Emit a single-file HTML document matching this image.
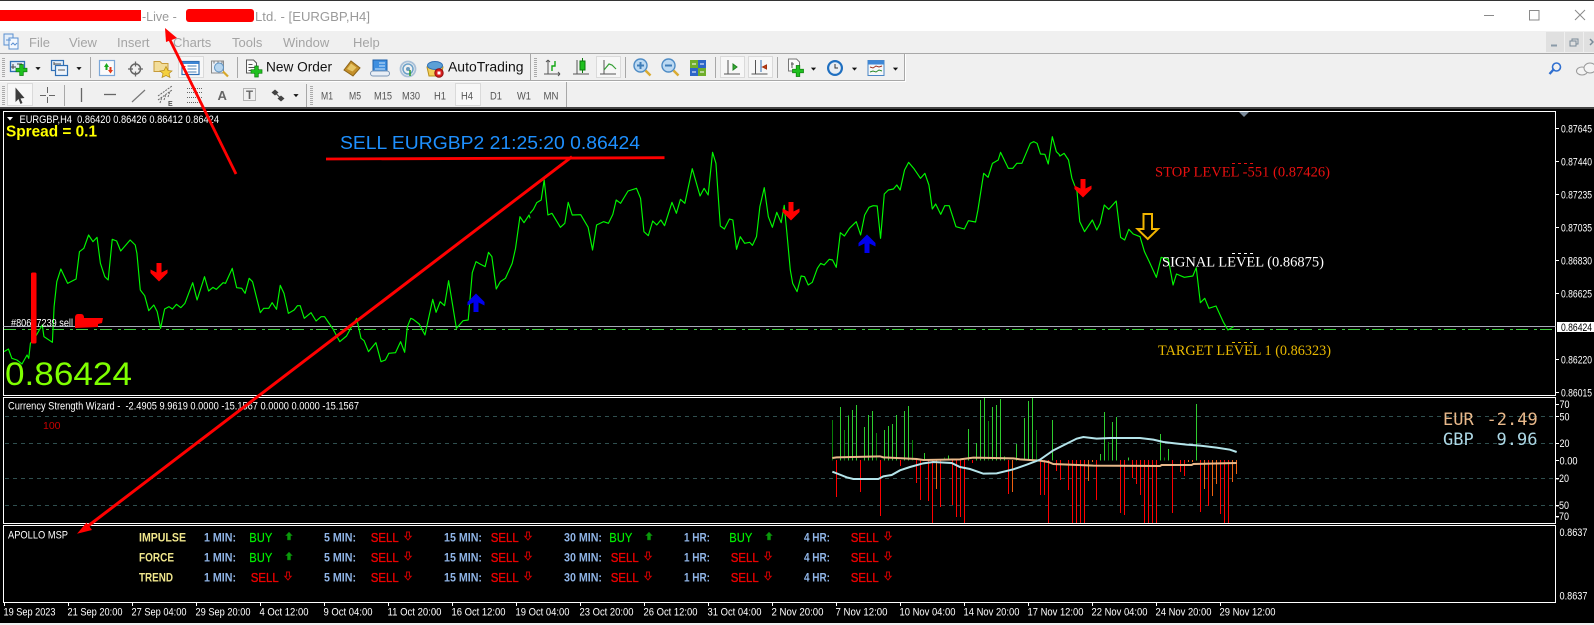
<!DOCTYPE html>
<html><head><meta charset="utf-8"><title>EURGBP,H4</title>
<style>
html,body{margin:0;padding:0;width:1594px;height:625px;overflow:hidden;background:#f0f0f0}
svg{display:block;font-family:"Liberation Sans",Arial,sans-serif}
.g{vector-effect:non-scaling-stroke;fill:none;stroke:#00f800;stroke-width:1.15;stroke-linejoin:round}
.m{font-size:13px;fill:#a4a4a4}
.p{font-size:11px;fill:#555}
.ax{font-size:11px;fill:#fff}
.lb{font-size:12px;font-weight:bold;fill:#f0e68c}
.mn{font-size:12px;font-weight:bold;fill:#8fb4e6}
.buy{font-size:13px;fill:#00ee00;stroke:#00ee00;stroke-width:.2}
.sell{font-size:13px;fill:#ee0000;stroke:#ee0000;stroke-width:.35}
.lv{font-family:"Liberation Serif",serif;font-size:15px}
.bars path{shape-rendering:crispEdges;fill:none;stroke-width:3}
.bg{stroke:#2ecc2e}
.bd{stroke:#087f08}
.br{stroke:#f00}
.bo{stroke:#f06010}
</style></head>
<body>
<svg width="1594" height="625" viewBox="0 0 1594 625" xmlns="http://www.w3.org/2000/svg">
<defs>
<polygon id="pl" points="-1.8,-5.5 1.8,-5.5 1.8,-1.8 5.5,-1.8 5.5,1.8 1.8,1.8 1.8,5.5 -1.8,5.5 -1.8,1.8 -5.5,1.8 -5.5,-1.8 -1.8,-1.8" fill="#1fc01f" stroke="#0a7a0a" stroke-width=".7"/>
<polygon id="dd" points="-2.6,-1.4 2.6,-1.4 0,1.6" fill="#111"/>
<polygon id="ua" points="0,-4.5 3.4,-.8 1.6,-.8 1.6,3.5 -1.6,3.5 -1.6,-.8 -3.4,-.8" fill="#0b9a0b" stroke="#086a08" stroke-width=".5"/>
<polygon id="da" points="-1.4,-4.5 1.4,-4.5 1.4,-.2 3.2,-.2 0,3.5 -3.2,-.2 -1.4,-.2" fill="none" stroke="#d00000" stroke-width="1"/>
<polygon id="ra" points="-2.5,0 2.5,0 2.5,9.5 8.5,6.5 8.5,10 0,18.5 -8.5,10 -8.5,6.5 -2.5,9.5" fill="#f00"/>
<polygon id="ba" points="-2.5,19 2.5,19 2.5,9.5 8.5,12.5 8.5,9 0,.5 -8.5,9 -8.5,12.5 -2.5,9.5" fill="#0000ee"/>
</defs>

<!-- title bar -->
<rect width="1594" height="31" fill="#fff"/>
<rect width="1594" height="1" fill="#333"/>
<text x="142" y="21" font-size="12.5" fill="#9a9a9a">-Live -</text>
<text x="255" y="21" font-size="12.5" fill="#9a9a9a" textLength="115" lengthAdjust="spacingAndGlyphs">Ltd. - [EURGBP,H4]</text>
<rect x="0" y="10" width="141" height="11" fill="#f00"/>
<rect x="186" y="9" width="68" height="13" rx="3" fill="#f00"/>
<path d="M1484 15.5h10" stroke="#8a8a8a"/>
<rect x="1529.5" y="10.5" width="9.5" height="9.5" fill="none" stroke="#8a8a8a"/>
<path d="M1575 10l10 10M1585 10l-10 10" stroke="#8a8a8a"/>

<!-- menu bar -->
<rect y="31" width="1594" height="22" fill="#efefef"/>
<rect x="0" y="31" width="1546" height="22" fill="#f0f0f0"/>
<g transform="translate(4,33)">
<rect x="0" y="1" width="9" height="11" fill="#e4eef9" stroke="#5a8fd0"/>
<rect x="5" y="5" width="9" height="11" fill="#f3f8fe" stroke="#5a8fd0"/>
<path d="M2 7h5M7 12l2-2 2 2 2-2" stroke="#5a8fd0" fill="none"/>
</g>
<text class="m" x="29" y="47">File</text>
<text class="m" x="69" y="47">View</text>
<text class="m" x="117" y="47">Insert</text>
<text class="m" x="173" y="47">Charts</text>
<text class="m" x="232" y="47">Tools</text>
<text class="m" x="283" y="47">Window</text>
<text class="m" x="353" y="47">Help</text>
<rect x="1546" y="32" width="18" height="20" fill="#e0e0e0"/>
<rect x="1565" y="32" width="18" height="20" fill="#e0e0e0"/>
<rect x="1584" y="32" width="10" height="20" fill="#e0e0e0"/>
<path d="M1551 45.5h6" stroke="#8a9aa8" stroke-width="2"/>
<path d="M1570 41h6v5h-6zM1572 41v-2h6v5h-2" stroke="#7a8a98" fill="none"/>
<path d="M1590 39l3 3-3 3" stroke="#7a8a98" stroke-width="1.5" fill="none"/>

<!-- toolbars -->
<rect y="53" width="1594" height="1" fill="#a8a8a8"/>
<rect y="54" width="1594" height="54" fill="#f0f0f0"/>
<rect x="0" y="80" width="905" height="1" fill="#a8a8a8"/>
<rect x="904" y="53" width="1" height="28" fill="#a8a8a8"/>
<rect x="0" y="81" width="906" height="1" fill="#fff"/>
<rect x="905" y="54" width="1" height="27" fill="#fff"/>
<path d="M3.5 58v19M3.5 86v19" stroke="#aaa" stroke-width="3" stroke-dasharray="1 1"/>
<path d="M535.5 58v19M311.5 86v19" stroke="#aaa" stroke-width="3" stroke-dasharray="1 1"/>
<path d="M530.5 54v26M90.5 57v21M237.5 57v21M625.5 57v21M715.5 57v21M777.5 57v21M64.5 85v21M306.5 84v23M566.5 82v26" stroke="#a8a8a8"/>

<!-- selected backgrounds -->
<g fill="#f7f7f7" stroke="#dadada">
<rect x="178.5" y="56.5" width="25" height="21"/>
<rect x="596.5" y="56.5" width="24" height="21"/>
<rect x="720.5" y="56.5" width="24" height="21"/>
<rect x="748.5" y="56.5" width="24" height="21"/>
<rect x="7.5" y="83.5" width="25" height="22"/>
<rect x="455.5" y="83.5" width="25" height="22"/>
</g>

<!-- toolbar 1 icons -->
<g transform="translate(19,68)"><rect x="-8.5" y="-6.5" width="14" height="10" fill="#e3edf8" stroke="#2f6fb5" stroke-width="1.3"/><path d="M-6-4v5M-8-1h5M-2-4h5" stroke="#444" fill="none"/><use href="#pl" x="2.5" y="2"/></g>
<use href="#dd" x="38" y="68.5"/>
<g transform="translate(59,68)"><rect x="-7.5" y="-7.5" width="12" height="10" fill="#e3edf8" stroke="#2f6fb5" stroke-width="1.2"/><rect x="-3.5" y="-2.5" width="12" height="10" fill="#eef4fb" stroke="#2f6fb5" stroke-width="1.2"/><path d="M-5-4h7M-1 2h7M-5-6v3" stroke="#555" fill="none"/></g>
<use href="#dd" x="79" y="68.5"/>
<g transform="translate(107,68)"><rect x="-7.5" y="-7.5" width="15" height="15" fill="#fbfbfb" stroke="#7aa7d8" stroke-width="1.2"/><path d="M-3-1l2.5-4 2.5 4h-1.5v3h-2v-3z" fill="#1aaa1a"/><path d="M1 2h1.5v-3h2v3h1.500l-2.500 3.500z" fill="#e23a1a"/></g>
<g transform="translate(135.5,69)" stroke="#666" fill="none"><circle r="5" stroke-width="1.5"/><path d="M0-7.500v5M0 2.500v5M-7.500 0h5M2.500 0h5" stroke-width="1.300"/></g>
<g transform="translate(163,68.500)"><path d="M-9-7h6l2 2h6v8h-14z" fill="#f2dd9a" stroke="#c79b3a"/><polygon points="3,-2 5,2 9,2.500 6,5 7,9 3,7 -1,9 0,5 -3,2.500 1,2" fill="#f4d03f" stroke="#b58a1a" stroke-width=".7"/></g>
<g transform="translate(190.500,68)"><rect x="-8.500" y="-6.500" width="17" height="13" fill="#fff" stroke="#2f6fb5" stroke-width="1.200"/><path d="M-8-6h16v2h-16z" fill="#3d86d6"/><path d="M-5.500-2v6" stroke="#d03030" stroke-dasharray="1 1"/><path d="M-3-2h9M-3 1h9M-3 4h9" stroke="#4a7fb5"/></g>
<g transform="translate(220,68.500)"><rect x="-8.500" y="-7.500" width="12" height="12" fill="#e8eef5" stroke="#8a8a8a"/><path d="M-6-7v2M-2-7v2M2-7v2" stroke="#777"/><circle cx="-1" cy="-1" r="4.500" fill="#b6d5ef" stroke="#5d93c3"/><path d="M3 3l5 5" stroke="#d7a82c" stroke-width="2.200"/></g>
<g transform="translate(254,68.500)"><path d="M-7.500-8.500h7l3 3v10h-10z" fill="#fafafa" stroke="#555"/><path d="M-5.500-4h4M-5.500-1h7M-5.500 2h3" stroke="#555" fill="none"/><use href="#pl" x="2.500" y="3"/></g>
<text x="266" y="71.700" font-size="13.500" fill="#111" textLength="66" lengthAdjust="spacingAndGlyphs">New Order</text>
<g transform="translate(352,69)"><polygon points="-8,1 -1,-8 8,-1 1,7" fill="#c4902a" stroke="#8d6418"/><polygon points="-5,0 -1,-5.500 4.500,-1.500 .5,2.500" fill="#e6c566"/></g>
<g transform="translate(380,67)"><rect x="-7" y="-7" width="14" height="11" fill="#3e8fe0" stroke="#1e5fa8"/><path d="M-1-4h6M-1-1h6M-5 2h10" stroke="#cfe6fa"/><path d="M-7 9a2.500 2.500 0 0 1 0-5h14a2.500 2.500 0 0 1 0 5z" fill="#e8eef6" stroke="#7a95b5"/></g>
<g transform="translate(408,69)" fill="none"><circle r="7.500" stroke="#a9c0d8" stroke-width="1.800"/><circle r="5" stroke="#6ba1c9" stroke-width="1.500"/><circle r="2" fill="#6a9abf"/><path d="M2 7v-6" stroke="#2a9a2a" stroke-width="1.500"/></g>
<g transform="translate(435,69)"><path d="M-8-2h16l-2 9h-12z" fill="#f3cf5a" stroke="#b88f1a"/><ellipse cx="0" cy="-3.500" rx="7.500" ry="4" fill="#5ba0d6" stroke="#2f6fb5"/><circle cx="4" cy="4" r="4.200" fill="#d81f1f" stroke="#901010"/><rect x="2.500" y="2.500" width="3" height="3" fill="#fff"/></g>
<text x="448" y="71.700" font-size="13.500" fill="#111" textLength="75.500" lengthAdjust="spacingAndGlyphs">AutoTrading</text>

<g transform="translate(553,68)" fill="none" stroke="#555"><path d="M-5-8v14M-9 6h16M-5-8l-2 2M-5-8l2 2M7 6l-2-2M7 6l-2 2"/><path d="M-1 3v-5h3v-5" stroke="#11a511" stroke-width="1.400"/></g>
<g transform="translate(582,68)" fill="none" stroke="#555"><path d="M-5-8v14M-9 6h16"/><rect x="-2" y="-7" width="5" height="9" fill="#1fc01f" stroke="#0a7a0a"/><path d="M.5-10v3M.5 2v3" stroke="#0a7a0a"/></g>
<g transform="translate(609,68)" fill="none" stroke="#555"><path d="M-5-8v14M-9 6h16"/><path d="M-5 2l5-6 3 1 4 4" stroke="#36a036" stroke-width="1.200"/></g>
<g transform="translate(642,67)"><circle cx="-1.500" cy="-1.500" r="6.500" fill="#bcd9f2" stroke="#4f8cc5" stroke-width="1.400"/><path d="M-5-1.500h7M-1.500-5v7" stroke="#3f7db8" stroke-width="2"/><path d="M3.500 3.500l5 5" stroke="#d9ab32" stroke-width="2.500"/></g>
<g transform="translate(670,67)"><circle cx="-1.500" cy="-1.500" r="6.500" fill="#bcd9f2" stroke="#4f8cc5" stroke-width="1.400"/><path d="M-5-1.500h7" stroke="#3f7db8" stroke-width="2"/><path d="M3.500 3.500l5 5" stroke="#d9ab32" stroke-width="2.500"/></g>
<g transform="translate(698,68)"><rect x="-8" y="-8" width="8" height="8" fill="#6fae2c"/><rect x="0" y="-8" width="8" height="8" fill="#2d66c8"/><rect x="-8" y="0" width="8" height="8" fill="#2d66c8"/><rect x="0" y="0" width="8" height="8" fill="#6fae2c"/><path d="M-6-4h4M2-4h4M-6 4h4M2 4h4" stroke="#fff"/></g>
<g transform="translate(733,68)" fill="none" stroke="#555"><path d="M-5-8v14M-9 6h16"/><polygon points="0,-4 4,-1 0,2" fill="#36b036" stroke="#208020"/></g>
<g transform="translate(760.500,68)" fill="none" stroke="#555"><path d="M-5-8v14M-9 6h16"/><path d="M.5-8v12" stroke="#2f6fb5"/><polygon points="6,-3 2,-1 6,1" fill="#c84010" stroke="#a03010"/></g>
<g transform="translate(795,67)"><path d="M-6.500-8h8l3 3v9h-11z" fill="#fafafa" stroke="#777"/><path d="M-4-3h3M-3-5v6" stroke="#555" fill="none"/><use href="#pl" x="3" y="4"/></g>
<use href="#dd" x="813.500" y="69"/>
<g transform="translate(835,68)"><circle r="8" fill="#1f6fc0"/><circle r="5.800" fill="#e9eef3"/><path d="M0-4v4h3" stroke="#333" fill="none"/></g>
<use href="#dd" x="854.500" y="69"/>
<g transform="translate(876,68)"><rect x="-8" y="-7.500" width="16" height="15" fill="#f5f7f9" stroke="#4a86c5"/><rect x="-8" y="-7.500" width="16" height="4" fill="#3d86d6"/><path d="M-6-1l3 1 3-2 3 1 3-1" stroke="#a03020" fill="none"/><path d="M-6 4l3-1 3 1 3-2 3 1" stroke="#2a8a2a" fill="none"/></g>
<use href="#dd" x="895.500" y="69"/>
<g transform="translate(1555,69)" fill="none"><circle cx="1.500" cy="-2" r="4" stroke="#2f6fd0" stroke-width="1.600"/><path d="M-1-0l-4.500 5" stroke="#2f6fd0" stroke-width="2.400"/></g>
<g transform="translate(1584,70)" fill="#f4f4f4" stroke="#999"><ellipse cx="-2" cy="1" rx="5.500" ry="4"/><ellipse cx="6" cy="-2" rx="6" ry="5"/></g>

<!-- toolbar 2 icons -->
<polygon points="15.500,87.500 15.500,102 18.500,99 20.500,104 22.500,103 20.500,98.500 24.500,98" fill="#3c3c3c"/>
<path d="M47.500 87v6M47.500 97v6M40 95.500h6M49 95.500h6" stroke="#666" fill="none"/>
<path d="M81.500 88v14" stroke="#666" stroke-width="1.300"/>
<path d="M104 94.500h12" stroke="#666" stroke-width="1.300"/>
<path d="M132 102l13-12" stroke="#777" stroke-width="1.200"/>
<g stroke="#666" fill="none"><path d="M158 100l14-10M158 96l14-10M160 103l2-6M164 100l2-6M168 97l2-6" stroke-dasharray="2 1"/></g>
<text x="168" y="106" font-size="7" font-weight="bold" fill="#555">E</text>
<g stroke="#666" fill="none" stroke-dasharray="1 1"><path d="M187 88.500h16M187 92.500h16M187 97.500h16M187 102.500h16"/></g>
<text x="217.500" y="100.200" font-size="13" font-weight="bold" fill="#666">A</text>
<rect x="243.500" y="88.500" width="12" height="12" fill="none" stroke="#777" stroke-dasharray="1 1"/>
<text x="246" y="99.200" font-size="11.500" font-weight="bold" fill="#666">T</text>
<path d="M271.500 92.500l3.500-3 3.500 3-3.500 3zM277.500 98.500l3.500-3 3.500 3-3.500 3z" fill="#444"/>
<path d="M275 92.500l6 6" stroke="#444"/>
<use href="#dd" x="296" y="95.500"/>
<text class="p" x="321" y="99.500" textLength="12" lengthAdjust="spacingAndGlyphs">M1</text>
<text class="p" x="349" y="99.500" textLength="12" lengthAdjust="spacingAndGlyphs">M5</text>
<text class="p" x="374" y="99.500" textLength="18" lengthAdjust="spacingAndGlyphs">M15</text>
<text class="p" x="402" y="99.500" textLength="18" lengthAdjust="spacingAndGlyphs">M30</text>
<text class="p" x="434" y="99.500" textLength="12" lengthAdjust="spacingAndGlyphs">H1</text>
<text class="p" x="461" y="99.500" textLength="12" lengthAdjust="spacingAndGlyphs">H4</text>
<text class="p" x="490" y="99.500" textLength="12" lengthAdjust="spacingAndGlyphs">D1</text>
<text class="p" x="517" y="99.500" textLength="14" lengthAdjust="spacingAndGlyphs">W1</text>
<text class="p" x="543.500" y="99.500" textLength="15" lengthAdjust="spacingAndGlyphs">MN</text>

<!-- chart area -->
<rect y="107" width="1594" height="2" fill="#444"/>
<rect y="109" width="1594" height="514" fill="#000"/>
<rect y="623" width="1594" height="2" fill="#f0f0f0"/>
<g fill="none" stroke="#fff">
<rect x="3.500" y="111.500" width="1552" height="284"/>
<rect x="3.500" y="397.500" width="1552" height="126"/>
<rect x="3.500" y="525.500" width="1552" height="77"/>
</g>
<polygon points="1239,112 1249,112 1244,117" fill="#7a8a9a"/>
<polygon points="7,117 13,117 10,120.500" fill="#fff"/>
<text x="19.500" y="123" font-size="11" fill="#fff" textLength="199.500" lengthAdjust="spacingAndGlyphs">EURGBP,H4&#160;&#160;0.86420 0.86426 0.86412 0.86424</text>
<text x="6" y="136.500" font-size="15.500" font-weight="bold" fill="#ff0" textLength="91" lengthAdjust="spacingAndGlyphs">Spread = 0.1</text>

<!-- levels -->
<rect x="3.500" y="326" width="1552" height="1" fill="#a8a8b8"/>
<path d="M4 329.500h1551" stroke="#3fcc3f" stroke-dasharray="12 6 3 3" fill="none"/>

<!-- price curve -->
<polyline class="g" transform="translate(0,130) scale(.33806,.33333)" points="12,665 25,657 35,685 50,690 65,702 80,675 85,685 90,640 105,620 125,585 130,620 155,637 160,530 168,455 180,417 200,460 225,447 235,365 248,355 262,315 275,335 287,322 297,400 310,440 320,450 332,328 345,333 357,363 385,330 400,345 405,370 415,480 428,497 440,542 455,525 465,545 475,595 487,537 500,530 510,537 522,523 535,533 547,520 570,458 583,510 605,440 617,483 630,472 640,478 660,458 667,460 687,415 700,473 715,475 725,490 737,445 747,455 770,548 780,535 795,535 805,518 818,538 829,466 840,490 853,550 870,540 880,527 888,527 900,565 920,548 935,573 950,560 960,560 985,597 1005,635 1025,618 1040,590 1055,565 1068,625 1077,632 1090,665 1112,638 1127,695 1140,690 1150,670 1170,668 1185,635 1197,667 1205,590 1215,565 1222,568 1240,582 1257,615 1280,508 1290,547 1302,515 1315,527 1327,452 1338,520 1350,595 1370,572 1385,570 1397,428 1408,395 1420,402 1435,410 1445,367 1455,380 1468,477 1480,455 1495,445 1515,400 1525,355 1538,260 1550,278 1565,255 1568,265"/>
<polyline class="g" transform="translate(530,120) scale(.33806,.33333)" points="0,280 10,268 20,248 33,240 42,180 53,285 65,280 90,322 103,310 113,247 125,285 150,284 172,322 185,390 197,315 218,305 232,310 245,283 255,240 268,250 290,213 315,205 327,235 337,335 350,347 363,303 375,315 387,300 398,317 420,247 433,280 445,238 458,250 480,146 503,228 515,205 527,225 540,97 550,130 563,318 575,327 590,297 600,300 611,388 622,350 635,370 650,367 658,376 670,350 680,260 693,203 705,290 717,322 730,277 743,308 752,256 760,340 770,450 777,490 790,515 802,468 812,470 823,495 835,487 850,445 860,430 870,435 885,418 895,420 906,442 918,338 930,348 945,325 965,305 978,345 990,285 1003,262 1015,257 1027,258 1037,355 1048,222 1060,210 1075,207 1085,195 1095,210 1108,150 1120,127 1135,145 1155,175 1168,160 1180,195 1190,267 1200,252 1215,283 1227,257 1240,257 1260,320 1285,327 1297,302 1318,306 1325,270 1342,160 1355,172 1368,130 1385,120 1392,97 1415,145 1428,145 1440,130 1455,130 1480,70 1490,65 1500,70 1510,102 1523,103 1533,132 1545,50 1557,95 1567,105"/>
<polyline class="g" transform="translate(1060,120) scale(.3406,.33333)" points="-3,106 0,108 12,100 25,120 35,175 50,215 58,305 72,335 95,300 108,330 118,310 130,255 143,268 165,243 178,352 190,360 202,328 215,342 235,350 248,395 262,425 283,472 297,412 318,418 332,495 342,462 365,472 390,468 400,443 412,548 425,535 437,565 458,558 480,607 493,630 510,620"/>

<!-- signals -->
<use href="#ra" x="159" y="263"/>
<use href="#ra" x="791" y="202"/>
<use href="#ra" x="1083" y="179"/>
<use href="#ba" x="476" y="293"/>
<use href="#ba" x="867" y="234"/>
<polygon points="1143.500,214 1152,214 1152,229 1158,229 1147.750,239 1137.500,229 1143.500,229" fill="#000" stroke="#f0b400" stroke-width="2"/>

<text x="11" y="326.500" font-size="11" fill="#fff" textLength="62" lengthAdjust="spacingAndGlyphs">#80617239 sell</text>

<!-- level labels -->
<text class="lv" x="1155" y="176.500" fill="#e81010" textLength="175" lengthAdjust="spacingAndGlyphs">STOP LEVEL -551 (0.87426)</text>
<path d="M1232 163.500h21" stroke="#e81010" stroke-dasharray="3 3" fill="none"/>
<text class="lv" x="1162" y="266.500" fill="#fff" textLength="162" lengthAdjust="spacingAndGlyphs">SIGNAL LEVEL (0.86875)</text>
<path d="M1232 253.500h21" stroke="#fff" stroke-dasharray="3 3" fill="none"/>
<text class="lv" x="1158" y="355" fill="#e8b800" textLength="173" lengthAdjust="spacingAndGlyphs">TARGET LEVEL 1 (0.86323)</text>
<path d="M1232 342.500h21" stroke="#e8b800" stroke-dasharray="3 3" fill="none"/>

<!-- big price & sell note -->
<text x="5" y="385" font-size="32" fill="#7fff00" textLength="127" lengthAdjust="spacingAndGlyphs">0.86424</text>
<text x="340" y="149" font-size="18" fill="#1e90ff" textLength="300" lengthAdjust="spacingAndGlyphs">SELL EURGBP2 21:25:20 0.86424</text>

<!-- price axis -->
<g stroke="#fff"><path d="M1555 128.500h4M1555 161.500h4M1555 194.500h4M1555 227.500h4M1555 260.500h4M1555 293.500h4M1555 359.500h4M1555 392.500h4M1555 404.500h4M1555 416.500h4M1555 443.500h4M1555 460.500h4M1555 478.500h4M1555 505.500h4M1555 516.500h4"/></g>
<rect x="1557" y="322" width="37" height="10" fill="#fff"/>
<g>
<text class="ax" x="1561" y="132.300" textLength="31" lengthAdjust="spacingAndGlyphs">0.87645</text>
<text class="ax" x="1561" y="165.300" textLength="31" lengthAdjust="spacingAndGlyphs">0.87440</text>
<text class="ax" x="1561" y="198.300" textLength="31" lengthAdjust="spacingAndGlyphs">0.87235</text>
<text class="ax" x="1561" y="231.300" textLength="31" lengthAdjust="spacingAndGlyphs">0.87035</text>
<text class="ax" x="1561" y="264.300" textLength="31" lengthAdjust="spacingAndGlyphs">0.86830</text>
<text class="ax" x="1561" y="297.300" textLength="31" lengthAdjust="spacingAndGlyphs">0.86625</text>
<text x="1561" y="330.800" font-size="11" fill="#000" textLength="31" lengthAdjust="spacingAndGlyphs">0.86424</text>
<text class="ax" x="1561" y="363.300" textLength="31" lengthAdjust="spacingAndGlyphs">0.86220</text>
<text class="ax" x="1561" y="396.300" textLength="31" lengthAdjust="spacingAndGlyphs">0.86015</text>
<text class="ax" x="1559.500" y="408" textLength="10" lengthAdjust="spacingAndGlyphs">70</text>
<text class="ax" x="1559.500" y="420.500" textLength="10" lengthAdjust="spacingAndGlyphs">50</text>
<text class="ax" x="1559.500" y="447" textLength="10" lengthAdjust="spacingAndGlyphs">20</text>
<text class="ax" x="1559.500" y="464.500" textLength="18" lengthAdjust="spacingAndGlyphs">0.00</text>
<text class="ax" x="1556" y="482" textLength="13" lengthAdjust="spacingAndGlyphs">-20</text>
<text class="ax" x="1556" y="509" textLength="13" lengthAdjust="spacingAndGlyphs">-50</text>
<text class="ax" x="1556" y="520" textLength="13" lengthAdjust="spacingAndGlyphs">-70</text>
<text class="ax" x="1559.500" y="536" textLength="28" lengthAdjust="spacingAndGlyphs">0.8637</text>
<text class="ax" x="1559.500" y="599.500" textLength="28" lengthAdjust="spacingAndGlyphs">0.8637</text>
</g>

<!-- sub window -->
<text x="8" y="409.500" font-size="11" fill="#fff" textLength="351" lengthAdjust="spacingAndGlyphs">Currency Strength Wizard -&#160;&#160;-2.4905 9.9619 0.0000 -15.1567 0.0000 0.0000 -15.1567</text>
<text x="43" y="429" font-size="10.500" fill="#c80000">100</text>
<g stroke="#2f4f4f" stroke-dasharray="4 4" fill="none"><path d="M5 416.500h1550M5 443.500h1550M5 478.500h1550M5 505.500h1550"/></g>
<text x="1443" y="425" font-family="'DejaVu Sans Mono',monospace" font-size="17" fill="#e8b88a">EUR</text>
<text x="1486.500" y="425" font-family="'DejaVu Sans Mono',monospace" font-size="17" fill="#e8b88a">-2.49</text>
<text x="1443" y="445" font-family="'DejaVu Sans Mono',monospace" font-size="17" fill="#add8e6">GBP</text>
<text x="1496.500" y="445" font-family="'DejaVu Sans Mono',monospace" font-size="17" fill="#add8e6">9.96</text>

<g class="bars" transform="translate(800,388) scale(.33333)">
<path class="bd" d="M97 218V96M133 218V126M229 218V135M337 218V156M433 218V208M565 218V99M709 218V126M925 218V162M1093 218V208"/>
<path class="bg" d="M121 218V57M145 218V82M157 218V66M169 218V51M193 218V117M205 218V81M217 218V69M253 218V126M265 218V114M277 218V108M289 218V81M313 218V69M325 218V54M373 218V195M445 218V202M505 218V123M529 218V165M541 218V36M553 218V30M577 218V57M589 218V51M601 218V33M613 218V205M649 218V168M673 218V90M685 218V39M697 218V30M757 218V96M901 218V198M913 218V72M937 218V102M949 218V87M985 218V208M1081 218V138M1105 218V183M1189 218V48"/>
<path class="br" d="M109 216V327M181 216V312M241 216V384M301 216V234M349 216V285M361 216V336M385 216V339M397 216V405M421 216V357M457 216V351M469 216V387M481 216V387M493 216V405M517 216V225M625 216V318M721 216V321M733 216V321M745 216V405M769 216V249M781 216V276M805 216V306M817 216V405M829 216V405M841 216V405M853 216V405M889 216V336M961 216V375M973 216V381M997 216V270M1009 216V288M1021 216V321M1033 216V405M1045 216V405M1057 216V405M1069 216V405M1117 216V375M1141 216V252M1153 216V264M1201 216V372M1225 216V354M1261 216V378M1273 216V405M1285 216V405"/>
<path class="bo" d="M409 216V303M637 216V312M865 216V279M877 216V222M1165 216V222M1177 216V222M1213 216V303M1237 216V324M1249 216V288M1297 216V282M1309 216V258"/>
<polyline fill="none" stroke="#e8b88a" stroke-width="6" points="97,210 110,208 240,205 250,208 350,213 370,216 480,214 520,209 640,211 660,214 720,218 745,222 760,228 880,233 1080,234 1085,231 1175,231 1180,228 1310,225"/>
<polyline fill="none" stroke="#b4e4ea" stroke-width="6" points="97,251 115,258 140,268 160,273 235,273 250,265 275,261 300,247 330,237 370,226 400,222 455,225 480,237 510,243 550,257 590,256 640,244 680,230 720,215 760,187 830,152 850,147 890,152 930,150 1020,150 1060,155 1090,162 1125,166 1160,170 1200,173 1250,179 1290,185 1310,192"/>
</g>

<!-- bottom panel -->
<text x="8" y="538.500" font-size="11" fill="#fff" textLength="60" lengthAdjust="spacingAndGlyphs">APOLLO MSP</text>
<text class="lb" x="139" y="541.500" textLength="47" lengthAdjust="spacingAndGlyphs">IMPULSE</text>
<text class="lb" x="139" y="561.500" textLength="35" lengthAdjust="spacingAndGlyphs">FORCE</text>
<text class="lb" x="139" y="581.500" textLength="34" lengthAdjust="spacingAndGlyphs">TREND</text>

<text class="mn" x="204" y="541.500" textLength="32" lengthAdjust="spacingAndGlyphs">1 MIN:</text>
<text class="mn" x="204" y="561.500" textLength="32" lengthAdjust="spacingAndGlyphs">1 MIN:</text>
<text class="mn" x="204" y="581.500" textLength="32" lengthAdjust="spacingAndGlyphs">1 MIN:</text>
<text class="mn" x="324" y="541.500" textLength="32" lengthAdjust="spacingAndGlyphs">5 MIN:</text>
<text class="mn" x="324" y="561.500" textLength="32" lengthAdjust="spacingAndGlyphs">5 MIN:</text>
<text class="mn" x="324" y="581.500" textLength="32" lengthAdjust="spacingAndGlyphs">5 MIN:</text>
<text class="mn" x="444" y="541.500" textLength="38" lengthAdjust="spacingAndGlyphs">15 MIN:</text>
<text class="mn" x="444" y="561.500" textLength="38" lengthAdjust="spacingAndGlyphs">15 MIN:</text>
<text class="mn" x="444" y="581.500" textLength="38" lengthAdjust="spacingAndGlyphs">15 MIN:</text>
<text class="mn" x="564" y="541.500" textLength="38" lengthAdjust="spacingAndGlyphs">30 MIN:</text>
<text class="mn" x="564" y="561.500" textLength="38" lengthAdjust="spacingAndGlyphs">30 MIN:</text>
<text class="mn" x="564" y="581.500" textLength="38" lengthAdjust="spacingAndGlyphs">30 MIN:</text>
<text class="mn" x="684" y="541.500" textLength="26" lengthAdjust="spacingAndGlyphs">1 HR:</text>
<text class="mn" x="684" y="561.500" textLength="26" lengthAdjust="spacingAndGlyphs">1 HR:</text>
<text class="mn" x="684" y="581.500" textLength="26" lengthAdjust="spacingAndGlyphs">1 HR:</text>
<text class="mn" x="804" y="541.500" textLength="26" lengthAdjust="spacingAndGlyphs">4 HR:</text>
<text class="mn" x="804" y="561.500" textLength="26" lengthAdjust="spacingAndGlyphs">4 HR:</text>
<text class="mn" x="804" y="581.500" textLength="26" lengthAdjust="spacingAndGlyphs">4 HR:</text>

<text class="buy" x="249.300" y="542" textLength="23" lengthAdjust="spacingAndGlyphs">BUY</text>
<text class="buy" x="249.300" y="562" textLength="23" lengthAdjust="spacingAndGlyphs">BUY</text>
<text class="sell" x="250.700" y="582" textLength="28" lengthAdjust="spacingAndGlyphs">SELL</text>
<text class="sell" x="370.700" y="542" textLength="28" lengthAdjust="spacingAndGlyphs">SELL</text>
<text class="sell" x="370.700" y="562" textLength="28" lengthAdjust="spacingAndGlyphs">SELL</text>
<text class="sell" x="370.700" y="582" textLength="28" lengthAdjust="spacingAndGlyphs">SELL</text>
<text class="sell" x="490.700" y="542" textLength="28" lengthAdjust="spacingAndGlyphs">SELL</text>
<text class="sell" x="490.700" y="562" textLength="28" lengthAdjust="spacingAndGlyphs">SELL</text>
<text class="sell" x="490.700" y="582" textLength="28" lengthAdjust="spacingAndGlyphs">SELL</text>
<text class="buy" x="609.300" y="542" textLength="23" lengthAdjust="spacingAndGlyphs">BUY</text>
<text class="sell" x="610.700" y="562" textLength="28" lengthAdjust="spacingAndGlyphs">SELL</text>
<text class="sell" x="610.700" y="582" textLength="28" lengthAdjust="spacingAndGlyphs">SELL</text>
<text class="buy" x="729.300" y="542" textLength="23" lengthAdjust="spacingAndGlyphs">BUY</text>
<text class="sell" x="730.700" y="562" textLength="28" lengthAdjust="spacingAndGlyphs">SELL</text>
<text class="sell" x="730.700" y="582" textLength="28" lengthAdjust="spacingAndGlyphs">SELL</text>
<text class="sell" x="850.700" y="542" textLength="28" lengthAdjust="spacingAndGlyphs">SELL</text>
<text class="sell" x="850.700" y="562" textLength="28" lengthAdjust="spacingAndGlyphs">SELL</text>
<text class="sell" x="850.700" y="582" textLength="28" lengthAdjust="spacingAndGlyphs">SELL</text>

<use href="#ua" x="289" y="536.500"/><use href="#ua" x="289" y="556.500"/><use href="#da" x="288" y="576.500"/>
<use href="#da" x="408" y="536.500"/><use href="#da" x="408" y="556.500"/><use href="#da" x="408" y="576.500"/>
<use href="#da" x="528" y="536.500"/><use href="#da" x="528" y="556.500"/><use href="#da" x="528" y="576.500"/>
<use href="#ua" x="649" y="536.500"/><use href="#da" x="648" y="556.500"/><use href="#da" x="648" y="576.500"/>
<use href="#ua" x="769" y="536.500"/><use href="#da" x="768" y="556.500"/><use href="#da" x="768" y="576.500"/>
<use href="#da" x="888" y="536.500"/><use href="#da" x="888" y="556.500"/><use href="#da" x="888" y="576.500"/>

<!-- time axis -->
<g stroke="#fff"><path d="M4.500 602v4M68.500 602v4M132.500 602v4M196.500 602v4M260.500 602v4M324.500 602v4M388.500 602v4M452.500 602v4M516.500 602v4M580.500 602v4M644.500 602v4M708.500 602v4M772.500 602v4M836.500 602v4M900.500 602v4M964.500 602v4M1028.500 602v4M1092.500 602v4M1156.500 602v4M1220.500 602v4"/></g>
<g>
<text class="ax" x="3.500" y="615.300" textLength="52" lengthAdjust="spacingAndGlyphs">19 Sep 2023</text>
<text class="ax" x="67.500" y="615.300" textLength="55" lengthAdjust="spacingAndGlyphs">21 Sep 20:00</text>
<text class="ax" x="131.500" y="615.300" textLength="55" lengthAdjust="spacingAndGlyphs">27 Sep 04:00</text>
<text class="ax" x="195.500" y="615.300" textLength="55" lengthAdjust="spacingAndGlyphs">29 Sep 20:00</text>
<text class="ax" x="259.500" y="615.300" textLength="49" lengthAdjust="spacingAndGlyphs">4 Oct 12:00</text>
<text class="ax" x="323.500" y="615.300" textLength="49" lengthAdjust="spacingAndGlyphs">9 Oct 04:00</text>
<text class="ax" x="387.500" y="615.300" textLength="54" lengthAdjust="spacingAndGlyphs">11 Oct 20:00</text>
<text class="ax" x="451.500" y="615.300" textLength="54" lengthAdjust="spacingAndGlyphs">16 Oct 12:00</text>
<text class="ax" x="515.500" y="615.300" textLength="54" lengthAdjust="spacingAndGlyphs">19 Oct 04:00</text>
<text class="ax" x="579.500" y="615.300" textLength="54" lengthAdjust="spacingAndGlyphs">23 Oct 20:00</text>
<text class="ax" x="643.500" y="615.300" textLength="54" lengthAdjust="spacingAndGlyphs">26 Oct 12:00</text>
<text class="ax" x="707.500" y="615.300" textLength="54" lengthAdjust="spacingAndGlyphs">31 Oct 04:00</text>
<text class="ax" x="771.500" y="615.300" textLength="52" lengthAdjust="spacingAndGlyphs">2 Nov 20:00</text>
<text class="ax" x="835.500" y="615.300" textLength="52" lengthAdjust="spacingAndGlyphs">7 Nov 12:00</text>
<text class="ax" x="899.500" y="615.300" textLength="56" lengthAdjust="spacingAndGlyphs">10 Nov 04:00</text>
<text class="ax" x="963.500" y="615.300" textLength="56" lengthAdjust="spacingAndGlyphs">14 Nov 20:00</text>
<text class="ax" x="1027.500" y="615.300" textLength="56" lengthAdjust="spacingAndGlyphs">17 Nov 12:00</text>
<text class="ax" x="1091.500" y="615.300" textLength="56" lengthAdjust="spacingAndGlyphs">22 Nov 04:00</text>
<text class="ax" x="1155.500" y="615.300" textLength="56" lengthAdjust="spacingAndGlyphs">24 Nov 20:00</text>
<text class="ax" x="1219.500" y="615.300" textLength="56" lengthAdjust="spacingAndGlyphs">29 Nov 12:00</text>
</g>

<!-- red annotations -->
<rect x="31" y="272.500" width="5.500" height="71" rx="1.500" fill="#f00"/>
<path d="M75 318q0-4 3-4h3q3 0 3 4h19l-1 5-4 1v3l-23 1z" fill="#f00"/>
<path d="M326 159L664.500 157.700" stroke="#f00" stroke-width="2.800" fill="none"/>
<path d="M572 156.700L88 526" stroke="#f00" stroke-width="3" fill="none"/>
<polygon points="77,533.700 86.500,522.500 92,530" fill="#f00"/>
<path d="M236 174L170 40" stroke="#f00" stroke-width="2.800" fill="none"/>
<polygon points="165,28 166,42 177,38" fill="#f00"/>
</svg>
</body></html>
